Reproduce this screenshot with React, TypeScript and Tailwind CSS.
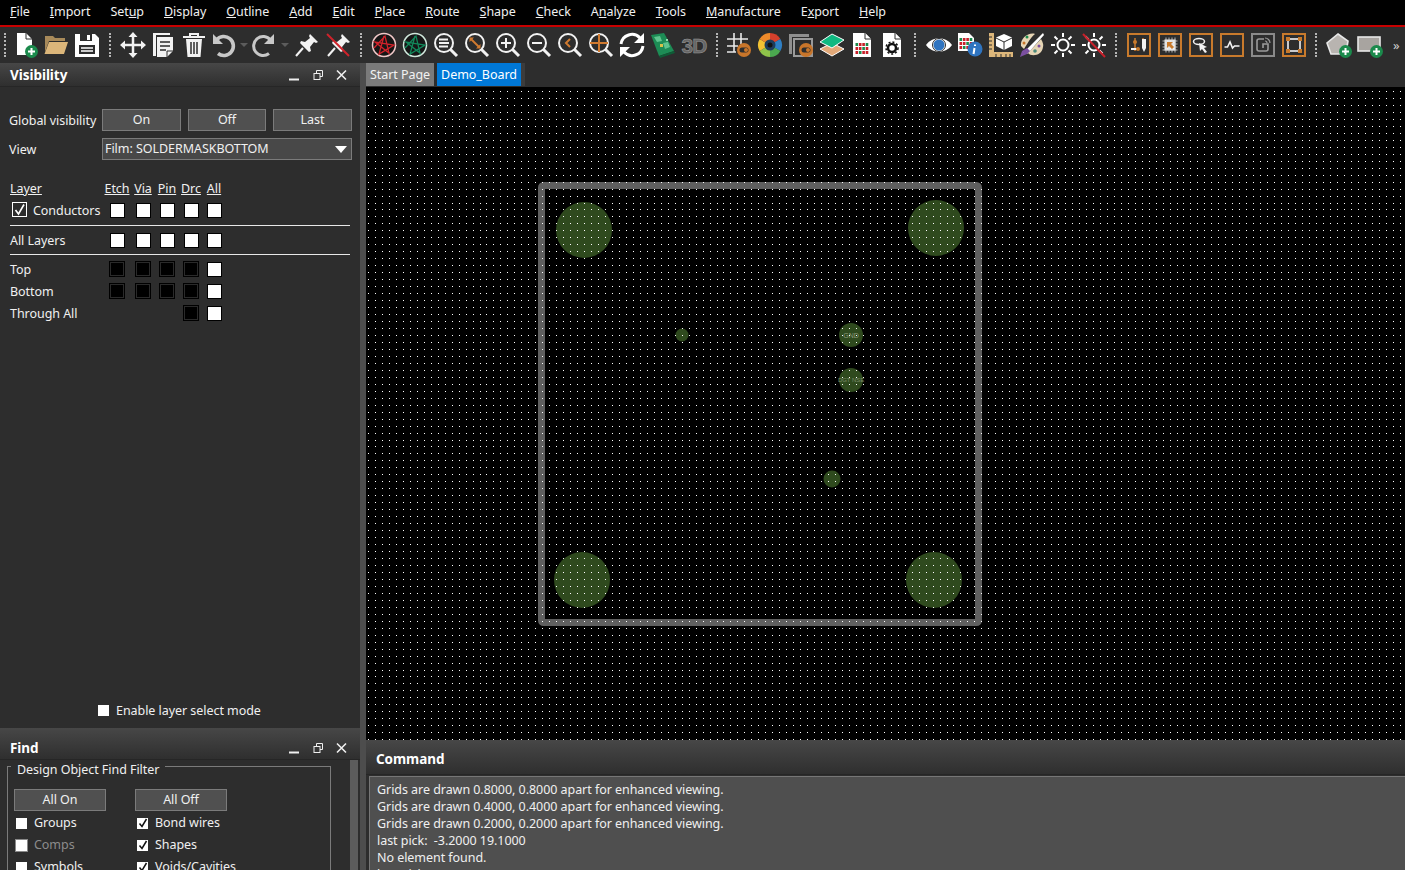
import React from 'react'

const MENUS = ['File', 'Import', 'Setup', 'Display', 'Outline', 'Add', 'Edit', 'Place', 'Route', 'Shape', 'Check', 'Analyze', 'Tools', 'Manufacture', 'Export', 'Help']
// index of the underlined letter for each menu
const MENU_KEYS = [0, 0, 3, 0, 0, 0, 0, 0, 0, 0, 0, 1, 0, 0, 1, 0]

const FONT = "font-['Noto_Sans',sans-serif]"

const Svg = ({ children }: { children: React.ReactNode }) => (
  <svg width="26" height="26" viewBox="0 0 26 26" fill="none">{children}</svg>
)

const PlusBadge = () => (
  <>
    <circle cx="19.5" cy="19.5" r="6.5" fill="#1b8a4c" />
    <path d="M19.5 16v7M16 19.5h7" stroke="#fff" strokeWidth="2" />
  </>
)

const Toggle = () => (
  <>
    <circle cx="18" cy="18" r="7" fill="#c8752a" />
    <rect x="13.5" y="15.5" width="9" height="5" rx="2.5" fill="#2d2d2d" />
    <circle cx="20" cy="18" r="2" fill="#c8752a" />
  </>
)

const Lens = ({ children }: { children?: React.ReactNode }) => (
  <Svg>
    <circle cx="11" cy="11" r="9" stroke="#f2f2f2" strokeWidth="2" />
    <path d="M17.5 17.5L24 24" stroke="#f2f2f2" strokeWidth="3" />
    {children}
  </Svg>
)

const Sun = ({ off }: { off?: boolean }) => (
  <Svg>
    <circle cx="13" cy="13" r="5.5" stroke="#fff" strokeWidth="2" />
    <path d="M13 1v4M13 21v4M1 13h4M21 13h4M4.5 4.5l3 3M18.5 18.5l3 3M21.5 4.5l-3 3M7.5 18.500l-3 3" stroke="#fff" strokeWidth="2" />
    {off && <path d="M2 2l22 23" stroke="#c8202a" strokeWidth="2" />}
  </Svg>
)

const Pin = ({ off }: { off?: boolean }) => (
  <Svg>
    <path d="M16 2l8 8-2 1-2-1-4 5 1 4-2 1-9-9 1-2 4 1 5-4-1-2z" fill="#f2f2f2" />
    <path d="M9 16l-7 8" stroke="#f2f2f2" strokeWidth="2" />
    {off && <path d="M1 2l22 22" stroke="#d0232b" strokeWidth="2" />}
  </Svg>
)

const Net = ({ color, ring }: { color: string; ring: string }) => (
  <Svg>
    <circle cx="13" cy="13" r="11.5" fill="#161616" stroke={ring} strokeWidth="1.5" />
    <path d="M3 16L14 4l4 17L4 10l19 3L8 22l5-18" stroke={color} strokeWidth="1.3" />
  </Svg>
)

const Doc = ({ children }: { children?: React.ReactNode }) => (
  <Svg>
    <path d="M4 1h12l6 6v18H4z" fill="#fff" />
    <path d="M16 1v6h6" fill="#fff" stroke="#2d2d2d" strokeWidth="1" />
    {children}
  </Svg>
)

const CellGrid = () => (
  <>
    {[0, 1, 2, 3].map((c) =>
      [0, 1, 2].map((r) => (
        <rect key={`${c}${r}`} x={6.5 + c * 3.4} y={11 + r * 4} width="2.6" height="3" fill={(c + r) % 3 === 0 ? '#1b8a4c' : '#c8202a'} />
      )),
    )}
  </>
)

const Frame = ({ gray, children }: { gray?: boolean; children: React.ReactNode }) => (
  <svg width="24" height="24" viewBox="0 0 24 24" fill="none">
    <rect x="1" y="1" width="22" height="22" stroke={gray ? '#8a8a8a' : '#c87a2c'} strokeWidth="2" />
    {children}
  </svg>
)

const Slot = ({ w = 'w-[31px]', children }: { w?: string; children: React.ReactNode }) => (
  <div className={`${w} h-full flex items-center justify-center shrink-0`}>{children}</div>
)

const Grip = ({ w = 'w-[14.5px]' }: { w?: string }) => (
  <div className={`${w} h-full flex items-center justify-center shrink-0`}>
    <div className="h-6 border-l-2 border-dotted border-[#b5b5b5]" />
  </div>
)

const DropSlot = ({ children }: { children: React.ReactNode }) => (
  <div className="w-[41px] h-full flex items-center shrink-0 pl-[1px]">
    {children}
    <div className="ml-[4px] w-0 h-0 border-x-[4px] border-x-transparent border-t-[4px] border-t-[#5c5c5c]" />
  </div>
)

const Toolbar = () => (
  <div className="h-[36px] bg-[#2d2d2d] flex items-center overflow-hidden">
    <Grip w="w-[9.5px]" />
    <Slot>
      <Svg>
        <path d="M5 1h9l6 6v10h-6v6H5z" fill="#fff" />
        <path d="M14 1v6h6" stroke="#2d2d2d" />
        <PlusBadge />
      </Svg>
    </Slot>
    <Slot>
      <Svg>
        <path d="M2 4h8l2 2h10v3H6L2 20z" fill="#a88a5a" />
        <path d="M6 10h19l-4 12H1.5z" fill="#dcb67a" />
      </Svg>
    </Slot>
    <Slot>
      <Svg>
        <path d="M1 2h20l4 4v19H1z" fill="#fff" />
        <rect x="6" y="2" width="12" height="7" fill="#2d2d2d" />
        <rect x="13" y="3" width="3" height="5" fill="#fff" />
        <rect x="5" y="13" width="16" height="9" fill="#2d2d2d" />
        <path d="M7 16h12M7 19h12" stroke="#fff" strokeWidth="1.5" />
      </Svg>
    </Slot>
    <Grip />
    <Slot>
      <Svg>
        <path d="M13 2v22M2 13h22" stroke="#f2f2f2" strokeWidth="2.5" />
        <path d="M13 0l4.500 5h-9zM13 26l4.500-5h-9zM0 13l5-4.500v9zM26 13l-5-4.500v9z" fill="#f2f2f2" />
      </Svg>
    </Slot>
    <Slot w="w-[30px]">
      <Svg>
        <path d="M3 4v20h3V3h14V1H3z" fill="#f2f2f2" />
        <path d="M7 5h16v14l-6 6H7z" fill="#f2f2f2" />
        <path d="M10 10h10M10 14h10M10 18h6" stroke="#2d2d2d" strokeWidth="1.6" />
        <path d="M17 25v-6h6" stroke="#2d2d2d" />
      </Svg>
    </Slot>
    <Slot>
      <Svg>
        <path d="M2 5h22" stroke="#f2f2f2" strokeWidth="2" />
        <path d="M9 5V2h8v3" stroke="#f2f2f2" strokeWidth="2" />
        <path d="M5 7h16l-1.500 18h-13z" fill="#f2f2f2" />
        <path d="M10 10v12M13 10v12M16 10v12" stroke="#2d2d2d" strokeWidth="1.500" />
      </Svg>
    </Slot>
    <DropSlot>
      <Svg>
        <path d="M6.500 8A9.500 9.500 0 1 1 8 21.500" stroke="#c8c8c8" strokeWidth="3.600" />
        <path d="M3 2v10h10z" fill="#c8c8c8" />
      </Svg>
    </DropSlot>
    <DropSlot>
      <Svg>
        <path d="M19.500 8A9.500 9.500 0 1 0 18 21.500" stroke="#c8c8c8" strokeWidth="3" />
        <path d="M23 2v10H13z" fill="#c8c8c8" />
      </Svg>
    </DropSlot>
    <Slot w="w-[32px]"><Pin /></Slot>
    <Slot><Pin off /></Slot>
    <Grip />
    <Slot><Net color="#d0232b" ring="#f0c8c8" /></Slot>
    <Slot><Net color="#12875a" ring="#d0e8dc" /></Slot>
    <Slot>
      <Lens>
        <path d="M6 7.500h9M6 11h10M6 14.500h9" stroke="#f2f2f2" strokeWidth="1.800" />
      </Lens>
    </Slot>
    <Slot>
      <Lens>
        <path d="M7 7l8 8" stroke="#d07a30" strokeWidth="2" />
        <path d="M5.500 5.500h4.500l-4.500 4.500zM16.500 16.500h-4.500l4.500-4.500z" fill="#d07a30" />
      </Lens>
    </Slot>
    <Slot>
      <Lens>
        <path d="M11 6v10M6 11h10" stroke="#f2f2f2" strokeWidth="2" />
      </Lens>
    </Slot>
    <Slot>
      <Lens>
        <path d="M6 11h10" stroke="#f2f2f2" strokeWidth="2" />
      </Lens>
    </Slot>
    <Slot>
      <Lens>
        <path d="M13 7l-4 4 4 4" stroke="#d07a30" strokeWidth="2" />
      </Lens>
    </Slot>
    <Slot>
      <Lens>
        <path d="M11 2v18M2 11h18" stroke="#d07a30" strokeWidth="2" />
      </Lens>
    </Slot>
    <Slot>
      <Svg>
        <path d="M2 12A11 11 0 0 1 21 6" stroke="#fff" strokeWidth="3" />
        <path d="M24 14A11 11 0 0 1 5 20" stroke="#fff" strokeWidth="3" />
        <path d="M25 1v10H15zM1 25V15h10z" fill="#fff" />
      </Svg>
    </Slot>
    <Slot>
      <Svg>
        <path d="M1 3l13-2 10 18-15 5z" fill="#1d8c55" />
        <path d="M9 24l15-5 1 2-15 5z" fill="#0e5c36" />
        <path d="M4 5l6-1 2 5-5 1zM13 11l5-1 2 5-5 2z" fill="#5fc48e" />
        <rect x="10" y="12" width="3" height="3" fill="#d8c14a" />
        <rect x="16" y="7" width="2" height="2" fill="#8fdcb0" />
      </Svg>
    </Slot>
    <Slot>
      <span className="font-['Liberation_Sans',sans-serif] font-bold text-[21px] leading-none tracking-[-1px] text-[#666666] [-webkit-text-stroke:0.5px_#9a9a9a]">3D</span>
    </Slot>
    <Grip />
    <Slot w="w-[30.500px]">
      <Svg>
        <path d="M8 1v19M15 1v11M1 7h21M1 14h11M1 20h9" stroke="#e8e8e8" strokeWidth="1.600" />
        <Toggle />
      </Svg>
    </Slot>
    <Slot w="w-[30.500px]">
      <svg width="26" height="26" viewBox="0 0 26 26">
        <path d="M13 13V1a12 12 0 0 1 10.400 6z" fill="#d6402c" />
        <path d="M13 13l10.400-6a12 12 0 0 1 0 12z" fill="#2f7fc4" />
        <path d="M13 13l10.400 6A12 12 0 0 1 13 25z" fill="#4ba84f" />
        <path d="M13 13v12a12 12 0 0 1-10.400-6z" fill="#8fc34a" />
        <path d="M13 13L2.600 19a12 12 0 0 1 0-12z" fill="#f2c233" />
        <path d="M13 13L2.600 7A12 12 0 0 1 13 1z" fill="#ef8a2a" />
        <circle cx="13" cy="13" r="5.500" fill="#1d3c5c" />
        <circle cx="13" cy="13" r="2.500" fill="#111" />
      </svg>
    </Slot>
    <Slot>
      <Svg>
        <path d="M1 2h20v3H4v17H1z" fill="#8f8f8f" />
        <rect x="6" y="7" width="18" height="17" fill="#2d2d2d" stroke="#9a9a9a" strokeWidth="2" />
        <Toggle />
      </Svg>
    </Slot>
    <Slot>
      <Svg>
        <path d="M1 17l12-6 12 6-12 7z" fill="#e2a878" stroke="#fff" />
        <path d="M1 10l12-8 12 6-12 8z" fill="#10b981" stroke="#fff" />
      </Svg>
    </Slot>
    <Slot w="w-[30px]">
      <Doc><CellGrid /></Doc>
    </Slot>
    <Slot w="w-[30px]">
      <Doc>
        <circle cx="13" cy="16" r="4" stroke="#111" strokeWidth="2.500" />
        <circle cx="13" cy="16" r="6" stroke="#111" strokeWidth="1.500" strokeDasharray="2 2" />
      </Doc>
    </Slot>
    <Grip w="w-[16px]" />
    <Slot>
      <Svg>
        <path d="M0 13C6 4 20 4 26 13 20 22 6 22 0 13z" fill="#fff" />
        <circle cx="13" cy="13" r="5.500" fill="#2f74c0" />
        <circle cx="13" cy="13" r="6.500" stroke="#2d2d2d" strokeWidth="1" />
      </Svg>
    </Slot>
    <Slot>
      <Svg>
        <path d="M1 1h11l5 5v13H1z" fill="#fff" />
        <g transform="translate(-4 -5)"><CellGrid /></g>
        <circle cx="18" cy="17" r="7.500" fill="#2f74c0" />
        <path d="M18 12.500v1.500M17.500 16l-1 6" stroke="#fff" strokeWidth="2" />
      </Svg>
    </Slot>
    <Slot>
      <Svg>
        <path d="M1 1h5v19h19v5H1z" fill="#dcb67a" />
        <path d="M1 5h3M1 9h3M1 13h3M1 17h3M8 25v-3M13 25v-3M18 25v-3M22 25v-3" stroke="#2d2d2d" />
        <path d="M16 2l8 3.500V14l-8 4-8-4V5.500z" fill="#fff" />
        <path d="M8 6l8 4 8-4M16 10v8" stroke="#2d2d2d" />
      </Svg>
    </Slot>
    <Slot>
      <Svg>
        <path d="M2 14C1 6 10 0 16 2 11 6 9 11 5 17z" fill="#e6d5b5" />
        <path d="M9 21c3 4 14 3 15-6 1-3-1-6-2-8-5 5-9 10-13 14z" fill="#e6d5b5" />
        <path d="M24 1L9 16l-4 4 3 2 3-3L25 3z" fill="#fff" />
        <path d="M8 16l3 3-3 3-7 3 2-6z" fill="#7b4fa0" />
        <circle cx="8" cy="5" r="1.500" fill="#1b8a4c" />
        <circle cx="5" cy="11" r="1.500" fill="#c8752a" />
        <circle cx="20" cy="14" r="1.500" fill="#7b4fa0" />
        <circle cx="16" cy="19" r="1.800" fill="#4c8a7a" />
      </Svg>
    </Slot>
    <Slot><Sun /></Slot>
    <Slot><Sun off /></Slot>
    <Grip />
    <Slot>
      <Frame>
        <path d="M8 5v13M16 5v3" stroke="#c87a2c" strokeWidth="1.500" />
        <circle cx="8" cy="9" r="2" fill="#c87a2c" />
        <path d="M4 16h6" stroke="#f2f2f2" strokeWidth="2" />
        <circle cx="11" cy="16" r="2" fill="#c87a2c" />
        <path d="M15 6h4v9l-2 4-2-4z" fill="#f2f2f2" />
      </Frame>
    </Slot>
    <Slot>
      <Frame>
        <rect x="6.500" y="6.500" width="11" height="11" fill="#f2f2f2" />
        <path d="M8 4.500v15M11 4.500v15M14 4.500v15M17 4.500v15M4.500 8h15M4.500 11h15M4.500 14h15M4.500 17h15" stroke="#d8d8d8" strokeWidth="0.800" />
        <path d="M9 9h6l-2 2 3 3-2 2-3-3-2 2z" fill="#c87a2c" />
      </Frame>
    </Slot>
    <Slot>
      <Frame>
        <ellipse cx="10" cy="8.500" rx="5.500" ry="3" stroke="#f2f2f2" strokeWidth="1.500" />
        <path d="M10 10l8 4-3 1 3 4-2 1-3-4-2 2z" fill="#f2f2f2" />
      </Frame>
    </Slot>
    <Slot>
      <Frame>
        <path d="M4.500 14h3l2.500-5 2.500 6 2-2h5" stroke="#f2f2f2" strokeWidth="1.600" />
      </Frame>
    </Slot>
    <Slot>
      <Frame gray>
        <path d="M13 6H8a2 2 0 0 0-2 2v8a2 2 0 0 0 2 2h7a2 2 0 0 0 2-2v-5h-5v4" stroke="#9a9a9a" strokeWidth="1.600" />
        <path d="M14 5a5 5 0 0 1 5 5M14 8a2 2 0 0 1 2 2" stroke="#9a9a9a" strokeWidth="1.200" />
      </Frame>
    </Slot>
    <Slot>
      <Frame>
        <rect x="6" y="6" width="12" height="12" stroke="#f2f2f2" strokeWidth="1.600" />
        <path d="M4 4h4v4H4zM16 4h4v4h-4zM4 16h4v4H4zM16 16h4v4h-4z" fill="#c87a2c" />
      </Frame>
    </Slot>
    <Grip w="w-[13.500px]" />
    <Slot>
      <Svg>
        <path d="M12 2l10 7-1 6-6 1-1 6H5L1 11z" fill="#b8b4b0" stroke="#e8e8e8" strokeWidth="1.600" />
        <PlusBadge />
      </Svg>
    </Slot>
    <Slot>
      <Svg>
        <rect x="1" y="5" width="22" height="14" fill="#a8a4a0" stroke="#e8e8e8" strokeWidth="1.600" />
        <PlusBadge />
      </Svg>
    </Slot>
    <div className="text-[13px] text-[#d0d0d0] pl-[8px] leading-none">»</div>
  </div>
)

const PanelHeader = ({ title, tall }: { title: string; tall?: boolean }) => (
  <div className={`${tall ? 'h-[32px] pt-[8px]' : 'h-[24px]'} shrink-0 flex items-center bg-gradient-to-b from-[#474747] to-[#2f2f2f] border-b border-[#262626] pl-[10px] pr-[5px]`}>
    <span className="text-[13.500px] font-bold text-white flex-1 pt-[2px]">{title}</span>
    <svg width="66" height="12" viewBox="0 0 66 12" fill="none" stroke="#efefef" className="mt-[1px]">
      <path d="M0 10.500h10" strokeWidth="2" />
      <rect x="25" y="4.500" width="6" height="6" />
      <path d="M27.500 4.500v-3h6v6h-2.500" />
      <path d="M48 1.500l9 9M57 1.500l-9 9" strokeWidth="1.600" />
    </svg>
  </div>
)

const Btn = ({ label, w }: { label: string; w: string }) => (
  <button type="button" className={`${w} h-[22px] bg-[#505050] border border-[#7b7b7b] leading-none text-[#f0f0f0] pt-[1px]`}>{label}</button>
)

const Box = ({ dark }: { dark?: boolean }) =>
  dark ? (
    <div className="w-[16px] h-[16px] bg-[#2a2a2a] border border-black p-[1px] shrink-0">
      <div className="w-full h-full bg-black" />
    </div>
  ) : (
    <div className="w-[15px] h-[15px] bg-white border border-black shrink-0" />
  )

// fixed columns for Etch / Via / Pin / Drc / All
const COLS = 'grid grid-cols-[94px_26px_26px_22px_26px_20px] items-center justify-items-center'

const Row = ({ label, boxes, first }: { label?: string; boxes: (boolean | null)[]; first?: React.ReactNode }) => (
  <div className={`${COLS} h-[22px]`}>
    <div className="justify-self-start text-[#f0f0f0] whitespace-nowrap pt-[2px]">{first ?? label}</div>
    {boxes.map((dark, i) => (dark === null ? <div key={i} /> : <Box key={i} dark={dark} />))}
  </div>
)

const Check = ({ on, disabled }: { on?: boolean; disabled?: boolean }) => (
  <div className={`w-[11px] h-[11px] bg-white flex items-center justify-center shrink-0 ${disabled ? 'outline outline-1 outline-[#8a8a8a]' : ''}`}>
    {on && (
      <svg width="10" height="10" viewBox="0 0 10 10" fill="none">
        <path d="M1.500 5.500L4 8.500 8.500 1" stroke="#111" strokeWidth="1.500" />
      </svg>
    )}
  </div>
)

const FindItem = ({ label, on, disabled }: { label: string; on?: boolean; disabled?: boolean }) => (
  <div className="flex items-center h-[22px] gap-[7px] whitespace-nowrap">
    <Check on={on} disabled={disabled} />
    <span className={disabled ? 'text-[#8c8c8c]' : 'text-[#f0f0f0]'}>{label}</span>
  </div>
)

const Visibility = () => (
  <div className="flex-1 flex flex-col min-h-0 bg-[#2d2d2d]">
    <PanelHeader title="Visibility" />
    <div className="flex-1 flex flex-col pl-[9px] pr-[8px] pt-[22px] text-[#f0f0f0]">
      <div className="flex items-center gap-[7px]">
        <span className="w-[86px] whitespace-nowrap pt-[2px]">Global visibility</span>
        <Btn label="On" w="w-[79px]" />
        <Btn label="Off" w="w-[78px]" />
        <Btn label="Last" w="w-[79px]" />
      </div>
      <div className="flex items-center mt-[7px]">
        <span className="w-[93px] pt-[2px]">View</span>
        <div className="w-[250px] h-[22px] bg-[#484848] border border-[#7b7b7b] flex items-center justify-between pl-[2px] pr-[4px]">
          <span className="pt-[1px]">Film: SOLDERMASKBOTTOM</span>
          <span className="w-0 h-0 border-x-[6px] border-x-transparent border-t-[7px] border-t-white" />
        </div>
      </div>
      <div className="mt-[19px] ml-[1px] w-[340px]">
        <div className={`${COLS} h-[20px] underline pt-[1px]`}>
          <span className="justify-self-start">Layer</span>
          <span>Etch</span>
          <span>Via</span>
          <span>Pin</span>
          <span>Drc</span>
          <span>All</span>
        </div>
        <Row
          boxes={[false, false, false, false, false]}
          first={
            <div className="flex items-center gap-[6px] pl-[2px]">
              <div className="w-[15px] h-[15px] bg-[#2d2d2d] border border-white flex items-center justify-center -mt-[3px]">
                <svg width="13" height="13" viewBox="0 0 13 13" fill="none">
                  <path d="M2.500 7L5.500 11 11 1.500" stroke="#fff" strokeWidth="1.600" />
                </svg>
              </div>
              <span>Conductors</span>
            </div>
          }
        />
        <div className="border-t border-[#e8e8e8] mt-[4px]" />
        <div className="my-[3px]">
          <Row label="All Layers" boxes={[false, false, false, false, false]} />
        </div>
        <div className="border-t border-[#e8e8e8] mb-[3px]" />
        <Row label="Top" boxes={[true, true, true, true, false]} />
        <Row label="Bottom" boxes={[true, true, true, true, false]} />
        <Row label="Through All" boxes={[null, null, null, true, false]} />
      </div>
      <div className="mt-auto mb-[9px] ml-[89px] flex items-center gap-[7px] h-[18px]">
        <div className="w-[11px] h-[11px] bg-white" />
        <span className="pt-[3px]">Enable layer select mode</span>
      </div>
    </div>
  </div>
)

const Find = () => (
  <div className="h-[142px] shrink-0 flex flex-col bg-[#2d2d2d]">
    <PanelHeader title="Find" tall />
    <div className="flex-1 flex min-h-0">
      <div className="w-[350px] pl-[7px] pt-[6px] overflow-hidden">
        <div className="w-[324px] h-[140px] border border-[#7b7b7b] relative pl-[6px] pt-[22px]">
          <span className="absolute left-[3px] top-[-6px] px-[6px] bg-[#2d2d2d] leading-[18px] text-[#f0f0f0] whitespace-nowrap">Design Object Find Filter</span>
          <div className="flex gap-[29px]">
            <div className="w-[92px]">
              <Btn label="All On" w="w-[92px]" />
              <div className="pl-[2px] mt-[1px]">
                <FindItem label="Groups" />
                <FindItem label="Comps" disabled />
                <FindItem label="Symbols" />
              </div>
            </div>
            <div className="w-[92px]">
              <Btn label="All Off" w="w-[92px]" />
              <div className="pl-[2px] mt-[1px]">
                <FindItem label="Bond wires" on />
                <FindItem label="Shapes" on />
                <FindItem label="Voids/Cavities" on />
              </div>
            </div>
          </div>
        </div>
      </div>
      <div className="w-[8px] bg-[#5c5c5c]" />
    </div>
  </div>
)

// the film's display grid is not a whole number of pixels, so each dot is snapped
const GRID_STEP = 6.97
let gridPath = ''
for (let x = 368; x < 1405; x += GRID_STEP) {
  for (let y = 91; y < 740; y += GRID_STEP) {
    gridPath += `M${Math.round(x)} ${Math.round(y)}h1v1h-1z`
  }
}

const Canvas = () => (
  <svg className="flex-1 min-h-0 w-full block bg-black" width="1039" height="653" viewBox="366 87 1039 653">
    <rect x="541.500" y="185.500" width="437" height="437" rx="2" fill="none" stroke="#5f5f5f" strokeWidth="7" />
    <g fill="#2f4a1e">
      <circle cx="584" cy="230" r="28" />
      <circle cx="936" cy="228" r="28" />
      <circle cx="582" cy="580" r="28" />
      <circle cx="934" cy="580" r="28" />
      <circle cx="682" cy="335" r="6.500" />
      <circle cx="851" cy="335" r="12" />
      <circle cx="851" cy="380" r="12" />
      <circle cx="832" cy="479" r="8.500" />
    </g>
    <text x="851" y="337.500" textAnchor="middle" fontSize="7" fontFamily="Liberation Sans" fill="#8c9c7c">GND</text>
    <text x="851" y="382" textAnchor="middle" fontSize="6" fontFamily="Liberation Sans" fill="#7a8a68">DGT NSE</text>
    <path d={gridPath} fill="#fff" shapeRendering="crispEdges" />
  </svg>
)

const LOG = [
  'Grids are drawn 0.8000, 0.8000 apart for enhanced viewing.',
  'Grids are drawn 0.4000, 0.4000 apart for enhanced viewing.',
  'Grids are drawn 0.2000, 0.2000 apart for enhanced viewing.',
  'last pick:  -3.2000 19.1000',
  'No element found.',
  'last pick:  -3.2000 19.1000',
]

const Command = () => (
  <div className="h-[130px] shrink-0 flex flex-col bg-[#2d2d2d]">
    <div className="h-[35px] shrink-0 flex items-center pl-[10px] pt-[4px] bg-gradient-to-b from-[#474747] to-[#2f2f2f] border-b border-[#262626]">
      <span className="text-[13.500px] font-bold text-white">Command</span>
    </div>
    <div className="flex-1 ml-[3px] mt-[1px] pl-[7px] pt-[4px] bg-[#4f4f4f] border-t border-l border-[#767676] overflow-hidden leading-[17px] text-[#f0f0f0] whitespace-pre">
      {LOG.map((l, i) => (
        <div key={i}>{l}</div>
      ))}
    </div>
  </div>
)

export default function App() {
  return (
    <div className={`${FONT} w-[1405px] h-[870px] overflow-hidden flex flex-col bg-[#2d2d2d] text-[12.500px] tracking-[-0.05px]`}>
      <div className="h-[25px] shrink-0 bg-black flex items-center pl-[10px] gap-[20px] text-[#f0f0f0]">
        {MENUS.map((m, i) => (
          <span key={m}>
            {m.slice(0, MENU_KEYS[i])}
            <span className="underline">{m[MENU_KEYS[i]]}</span>
            {m.slice(MENU_KEYS[i] + 1)}
          </span>
        ))}
      </div>
      <div className="h-[2px] shrink-0 bg-[#c80000]" />
      <Toolbar />
      <div className="flex-1 min-h-0 flex">
        <div className="w-[360px] shrink-0 flex flex-col">
          <Visibility />
          <Find />
        </div>
        <div className="w-[6px] shrink-0 bg-[#4d4d4d]" />
        <div className="flex-1 min-w-0 flex flex-col">
          <div className="h-[24px] shrink-0 bg-[#2d2d2d] flex">
            <div className="w-[68px] h-[23px] bg-[#7a7a7a] text-[#f2f2f2] flex items-center justify-center pt-[1px]">Start Page</div>
            <div className="w-[3px]" />
            <div className="w-[84px] h-[23px] bg-[#0078d7] text-white flex items-center justify-center pt-[1px]">Demo_Board</div>
            <div className="w-[4px] h-[23px] bg-[#3c3c3c]" />
          </div>
          <Canvas />
          <Command />
        </div>
      </div>
    </div>
  )
}
